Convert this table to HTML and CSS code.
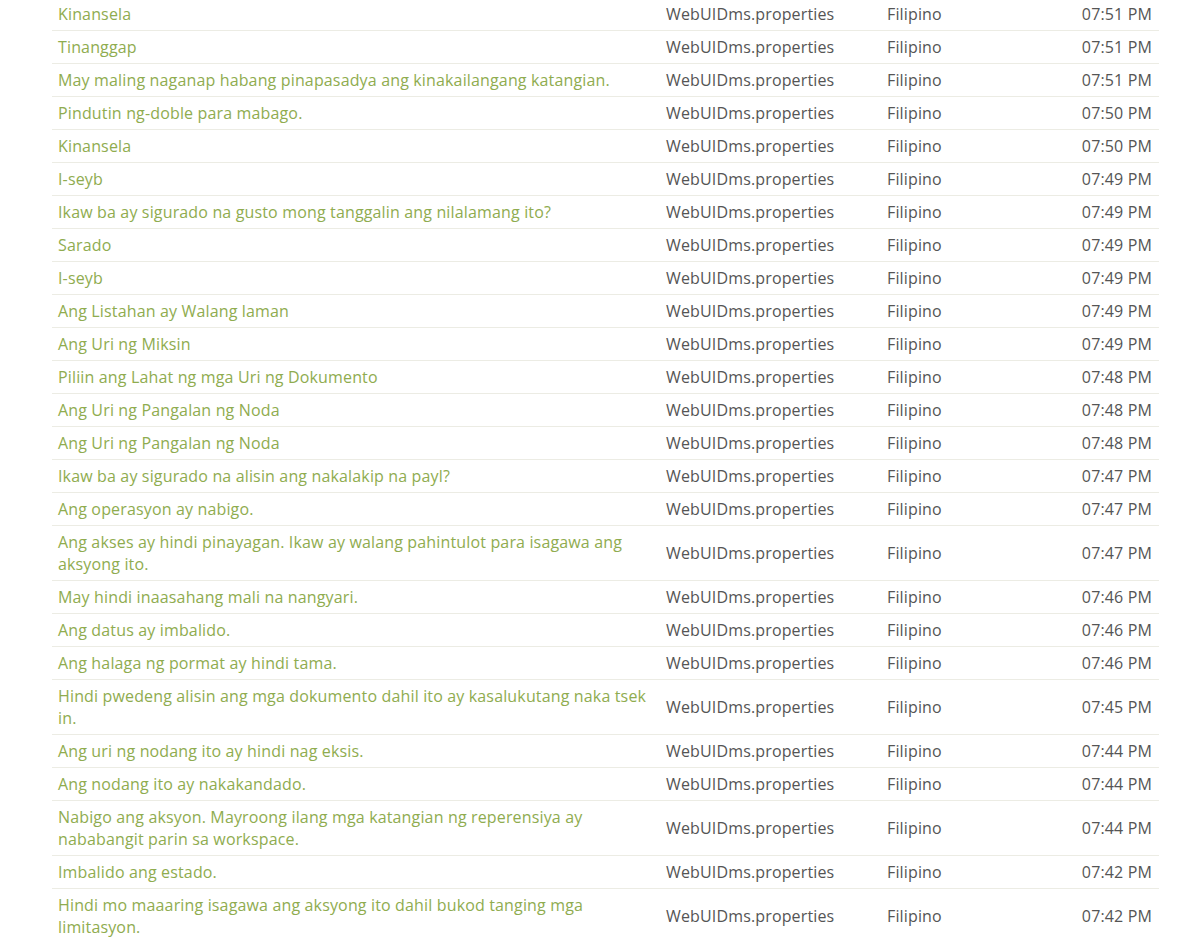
FILE: index.html
```html
<!DOCTYPE html>
<html lang="en">
<head>
  <meta charset="UTF-8" />
  <title>Translation Log</title>
  <link rel="stylesheet" href="styles.css">
</head>
<body>

<div class="log">
  <table>
    <colgroup>
      <col class="col-text">
      <col class="col-file">
      <col class="col-lang">
      <col class="col-time">
    </colgroup>
    <tbody id="logRows">
      <tr><td class="msg">Kinansela</td><td>WebUIDms.properties</td><td>Filipino</td><td class="time">07:51 PM</td></tr>
      <tr><td class="msg">Tinanggap</td><td>WebUIDms.properties</td><td>Filipino</td><td class="time">07:51 PM</td></tr>
      <tr><td class="msg">May maling naganap habang pinapasadya ang kinakailangang katangian.</td><td>WebUIDms.properties</td><td>Filipino</td><td class="time">07:51 PM</td></tr>
      <tr><td class="msg">Pindutin ng-doble para mabago.</td><td>WebUIDms.properties</td><td>Filipino</td><td class="time">07:50 PM</td></tr>
      <tr><td class="msg">Kinansela</td><td>WebUIDms.properties</td><td>Filipino</td><td class="time">07:50 PM</td></tr>
      <tr><td class="msg">I-seyb</td><td>WebUIDms.properties</td><td>Filipino</td><td class="time">07:49 PM</td></tr>
      <tr><td class="msg">Ikaw ba ay sigurado na gusto mong tanggalin ang nilalamang ito?</td><td>WebUIDms.properties</td><td>Filipino</td><td class="time">07:49 PM</td></tr>
      <tr><td class="msg">Sarado</td><td>WebUIDms.properties</td><td>Filipino</td><td class="time">07:49 PM</td></tr>
      <tr><td class="msg">I-seyb</td><td>WebUIDms.properties</td><td>Filipino</td><td class="time">07:49 PM</td></tr>
      <tr><td class="msg">Ang Listahan ay Walang laman</td><td>WebUIDms.properties</td><td>Filipino</td><td class="time">07:49 PM</td></tr>
      <tr><td class="msg">Ang Uri ng Miksin</td><td>WebUIDms.properties</td><td>Filipino</td><td class="time">07:49 PM</td></tr>
      <tr><td class="msg">Piliin ang Lahat ng mga Uri ng Dokumento</td><td>WebUIDms.properties</td><td>Filipino</td><td class="time">07:48 PM</td></tr>
      <tr><td class="msg">Ang Uri ng Pangalan ng Noda</td><td>WebUIDms.properties</td><td>Filipino</td><td class="time">07:48 PM</td></tr>
      <tr><td class="msg">Ang Uri ng Pangalan ng Noda</td><td>WebUIDms.properties</td><td>Filipino</td><td class="time">07:48 PM</td></tr>
      <tr><td class="msg">Ikaw ba ay sigurado na alisin ang nakalakip na payl?</td><td>WebUIDms.properties</td><td>Filipino</td><td class="time">07:47 PM</td></tr>
      <tr><td class="msg">Ang operasyon ay nabigo.</td><td>WebUIDms.properties</td><td>Filipino</td><td class="time">07:47 PM</td></tr>
      <tr><td class="msg">Ang akses ay hindi pinayagan. Ikaw ay walang pahintulot para isagawa ang aksyong ito.</td><td>WebUIDms.properties</td><td>Filipino</td><td class="time">07:47 PM</td></tr>
      <tr><td class="msg">May hindi inaasahang mali na nangyari.</td><td>WebUIDms.properties</td><td>Filipino</td><td class="time">07:46 PM</td></tr>
      <tr><td class="msg">Ang datus ay imbalido.</td><td>WebUIDms.properties</td><td>Filipino</td><td class="time">07:46 PM</td></tr>
      <tr><td class="msg">Ang halaga ng pormat ay hindi tama.</td><td>WebUIDms.properties</td><td>Filipino</td><td class="time">07:46 PM</td></tr>
      <tr><td class="msg">Hindi pwedeng alisin ang mga dokumento dahil ito ay kasalukutang naka tsek in.</td><td>WebUIDms.properties</td><td>Filipino</td><td class="time">07:45 PM</td></tr>
      <tr><td class="msg">Ang uri ng nodang ito ay hindi nag eksis.</td><td>WebUIDms.properties</td><td>Filipino</td><td class="time">07:44 PM</td></tr>
      <tr><td class="msg">Ang nodang ito ay nakakandado.</td><td>WebUIDms.properties</td><td>Filipino</td><td class="time">07:44 PM</td></tr>
      <tr><td class="msg">Nabigo ang aksyon. Mayroong ilang mga katangian ng reperensiya ay nababangit parin sa workspace.</td><td>WebUIDms.properties</td><td>Filipino</td><td class="time">07:44 PM</td></tr>
      <tr><td class="msg">Imbalido ang estado.</td><td>WebUIDms.properties</td><td>Filipino</td><td class="time">07:42 PM</td></tr>
      <tr><td class="msg">Hindi mo maaaring isagawa ang aksyong ito dahil bukod tanging mga limitasyon.</td><td>WebUIDms.properties</td><td>Filipino</td><td class="time">07:42 PM</td></tr>
    </tbody>
  </table>
</div>

</body>
</html>
```

FILE: styles.css
```css
body {
  margin: 0;
  font-family: 'Open Sans', sans-serif;
  background-color: #ffffff;
  color: #555555;
}

.log {
  padding: 0 38px 0 52px;
  margin-top: -2px;
}

table {
  width: 100%;
  border-collapse: collapse;
  table-layout: fixed;
  font-size: 16px;
  line-height: 22px;
  letter-spacing: 0.15px;
}

.col-text { width: 608px; }
.col-file { width: 221px; }
.col-lang { width: 150px; }

td {
  padding: 5px 6px;
  border-bottom: 1px solid #ecece4;
  vertical-align: middle;
}

td.msg {
  color: #8fac4f;
  padding-right: 10px;
}

td.time {
  text-align: right;
  padding-right: 7px;
}
```
